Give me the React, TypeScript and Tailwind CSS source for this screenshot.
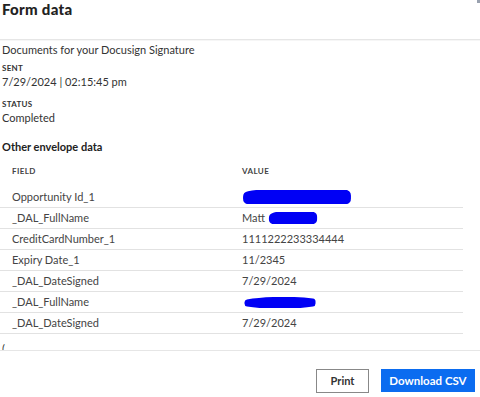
import React from "react";

const rows: { field: string; value: React.ReactNode }[] = [
  { field: "Opportunity Id_1", value: <Scribble w={110} h={14} /> },
  {
    field: "_DAL_FullName",
    value: (
      <span className="flex items-center gap-[3px]">
        Matt <Scribble w={50} h={12} />
      </span>
    ),
  },
  { field: "CreditCardNumber_1", value: "1111222233334444" },
  { field: "Expiry Date_1", value: "11/2345" },
  { field: "_DAL_DateSigned", value: "7/29/2024" },
  { field: "_DAL_FullName", value: <Scribble w={76} h={11} thin /> },
  { field: "_DAL_DateSigned", value: "7/29/2024" },
];

function Scribble({ w, h, thin }: { w: number; h: number; thin?: boolean }) {
  return (
    <svg width={w} height={h} viewBox={`0 0 ${w} ${h}`} className="block">
      <path
        d={`M${h / 2} ${h * 0.5} C ${w * 0.3} ${h * 0.2}, ${w * 0.7} ${h * 0.2}, ${w - h / 2} ${h * 0.4} L ${w - h / 2} ${h * 0.6} C ${w * 0.7} ${h * 0.85}, ${w * 0.3} ${h * 0.85}, ${h / 2} ${h * 0.6} Z`}
        fill="#0000f5"
        stroke="#0000f5"
        strokeWidth={thin ? h * 0.55 : h * 0.85}
        strokeLinejoin="round"
        strokeLinecap="round"
      />
    </svg>
  );
}

export default function App() {
  return (
    <div
      className="relative h-[397px] w-[480px] overflow-hidden bg-white text-[#333]"
      style={{ fontFamily: "Lato, 'Noto Sans', sans-serif" }}
    >
      <div className="absolute right-0 top-0 h-[3px] w-[3px] bg-gray-400" />
      <h1 className="h-[39px] pl-[2px] pt-[1px] text-[15px] font-black leading-[16px] tracking-[0.3px] text-[#222]">
        Form data
      </h1>
      <div className="h-[2px] border-t border-[#e6e6e6] bg-[#f6f6f6]" />

      <div className="pl-[2px] pt-[2px]">
        <p className="text-[11px] leading-[14px]">Documents for your Docusign Signature</p>

        <div className="mt-[6px] text-[8px] font-bold leading-[11px] tracking-[0.3px] text-[#333]">SENT</div>
        <div className="text-[11px] leading-[16px]">7/29/2024 | 02:15:45 pm</div>

        <div className="mt-[9px] text-[8px] font-bold leading-[11px] tracking-[0.3px] text-[#333]">STATUS</div>
        <div className="text-[11px] leading-[16px]">Completed</div>

        <div className="mt-[14px] text-[11px] font-bold leading-[14px] text-[#222]">Other envelope data</div>
      </div>

      <div className="mt-[10px] w-[463px]">
        <div className="flex h-[14px] items-center text-[8px] font-bold tracking-[0.4px] text-[#444]">
          <div className="w-[242px] pl-[12px]">FIELD</div>
          <div>VALUE</div>
        </div>
        <div className="mt-[9px]">
          {rows.map((r, i) => (
            <div
              key={i}
              className="flex h-[21px] items-center border-b border-[#e2e2e2] text-[11px] text-[#444]"
            >
              <div className="w-[242px] pl-[12px]">{r.field}</div>
              <div>{r.value}</div>
            </div>
          ))}
        </div>
      </div>

      <div className="h-[17px] overflow-hidden border-b border-[#e6e6e6] pl-[2px] pt-[9px] text-[11px] leading-[12px]">
        (
      </div>

      <div className="flex justify-end gap-[12px] pr-[5px] pt-[18px]">
        <button className="h-[24px] w-[53px] border border-[#888] bg-white text-[11px] font-bold text-[#333]">
          Print
        </button>
        <button className="h-[23px] w-[94px] bg-[#0b6cf0] text-[11.5px] font-bold text-white">
          Download CSV
        </button>
      </div>
    </div>
  );
}
